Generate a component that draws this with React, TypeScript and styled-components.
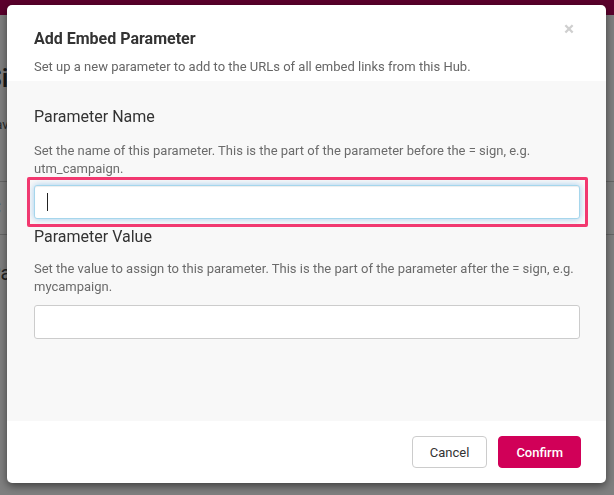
import React from "react";
import styled, { createGlobalStyle } from "styled-components";

const GlobalStyle = createGlobalStyle`
  html, body { margin: 0; padding: 0; }
  body {
    font-family: Roboto, "Liberation Sans", Arial, sans-serif;
    background: #ffffff;
    width: 614px;
    height: 495px;
    overflow: hidden;
  }
  * { box-sizing: border-box; }
`;

const BackPage = styled.div`
  width: 614px;
  height: 495px;
  background: #ffffff;
  display: flex;
  flex-direction: column;
`;

const TopBar = styled.div`
  height: 15px;
  background: #b60058;
  flex: none;
`;

const BackContent = styled.div`
  display: flex;
  flex-direction: column;
  padding: 48px 0 0 0;
  margin-left: -14px;
`;

const BackTitle = styled.div`
  font-size: 26px;
  font-weight: 500;
  color: #333;
  line-height: 30px;
`;

const BackText = styled.div`
  margin-top: 23px;
  font-size: 13px;
  color: #555;
  line-height: 18px;
`;

const BackRow = styled.div<{ $top: number; $height: number }>`
  margin-top: ${(p) => p.$top}px;
  border-top: 1px solid #ccc;
  height: ${(p) => p.$height}px;
  display: flex;
  align-items: center;
  font-size: 20px;
  color: #444;
  padding-left: 2px;
  width: 640px;
`;

const Overlay = styled.div`
  position: fixed;
  inset: 0;
  background: rgba(0, 0, 0, 0.5);
  display: flex;
  align-items: flex-start;
  padding: 5px 0 0 7px;
`;

const Modal = styled.div`
  width: 599px;
  background: #ffffff;
  border-radius: 5px;
  box-shadow: 0 3px 9px rgba(0, 0, 0, 0.5);
  display: flex;
  flex-direction: column;
  overflow: hidden;
`;

const Header = styled.div`
  height: 76px;
  padding: 24px 32px 0 27px;
  display: flex;
  justify-content: space-between;
  align-items: flex-start;
`;

const HeaderText = styled.div`
  display: flex;
  flex-direction: column;
  gap: 9px;
`;

const Title = styled.h4`
  margin: 0;
  font-size: 16px;
  line-height: 20px;
  font-weight: 700;
  color: #333;
`;

const Subtitle = styled.p`
  margin: 0;
  font-size: 13px;
  line-height: 18px;
  color: #666;
`;

const CloseButton = styled.button`
  border: none;
  background: none;
  padding: 0;
  margin-top: -10px;
  font-family: inherit;
  font-size: 19px;
  line-height: 20px;
  font-weight: 700;
  color: #cfcfcf;
  cursor: pointer;
`;

const Body = styled.div`
  height: 340px;
  background: #f8f8f8;
  padding: 26px 26px 0 27px;
  display: flex;
  flex-direction: column;
  gap: 8px;
`;

const Field = styled.div`
  display: flex;
  flex-direction: column;
`;

const Label = styled.label`
  font-size: 16px;
  line-height: 20px;
  color: #333;
`;

const Help = styled.p<{ $gap: number }>`
  margin: ${(p) => p.$gap}px 0 0;
  font-size: 13px;
  line-height: 18px;
  color: #6b6b6b;
`;

const FocusRing = styled.div`
  margin: -1px -8px -8px -7px;
  border: 3px solid #f3386f;
  border-radius: 2px;
  padding: 5px 5px 5px 4px;
  position: relative;
`;

const Caret = styled.span`
  position: absolute;
  left: 17px;
  top: 13px;
  width: 1px;
  height: 18px;
  background: #222;
  pointer-events: none;
`;

const TextInput = styled.input<{ $focused?: boolean; $gap: number }>`
  margin-top: ${(p) => p.$gap}px;
  display: block;
  width: 546px;
  height: 34px;
  padding: 0 12px;
  font-family: inherit;
  font-size: 14px;
  color: #333;
  background: #fff;
  border-radius: 3px;
  border: 1px solid ${(p) => (p.$focused ? "#a6d6ec" : "#cccccc")};
  box-shadow: ${(p) =>
    p.$focused
      ? "inset 0 1px 1px rgba(0,0,0,0.075), 0 0 6px rgba(102,175,233,0.6)"
      : "none"};
  outline: none;
  caret-color: ${(p) => (p.$focused ? "transparent" : "#222")};
`;

const Footer = styled.div`
  height: 62px;
  padding: 15px 25px 0 0;
  display: flex;
  justify-content: flex-end;
  align-items: flex-start;
  gap: 11px;
`;

const Button = styled.button<{ $primary?: boolean }>`
  height: 32px;
  padding: 0 17px;
  border-radius: 4px;
  font-family: inherit;
  font-size: 13px;
  font-weight: ${(p) => (p.$primary ? 500 : 400)};
  border: 1px solid ${(p) => (p.$primary ? "#d10058" : "#cccccc")};
  background: ${(p) => (p.$primary ? "#d10058" : "#ffffff")};
  color: ${(p) => (p.$primary ? "#ffffff" : "#333333")};
  cursor: pointer;
`;

export default function App() {
  return (
    <>
      <GlobalStyle />
      <BackPage aria-hidden="true">
        <TopBar />
        <BackContent>
          <BackTitle>Site</BackTitle>
          <BackText>Hava</BackText>
          <BackRow $top={47} $height={53}>C</BackRow>
          <BackRow $top={0} $height={76}>Pa</BackRow>
        </BackContent>
      </BackPage>
      <Overlay>
        <Modal role="dialog" aria-labelledby="dlg-title">
          <Header>
            <HeaderText>
              <Title id="dlg-title">Add Embed Parameter</Title>
              <Subtitle>
                Set up a new parameter to add to the URLs of all embed links from this Hub.
              </Subtitle>
            </HeaderText>
            <CloseButton aria-label="Close">×</CloseButton>
          </Header>
          <Body>
            <Field>
              <Label htmlFor="param-name">Parameter Name</Label>
              <Help $gap={15}>
                Set the name of this parameter. This is the part of the parameter before the = sign,
                e.g. utm_campaign.
              </Help>
              <FocusRing>
                <TextInput id="param-name" $focused $gap={0} />
                <Caret />
              </FocusRing>
            </Field>
            <Field>
              <Label htmlFor="param-value">Parameter Value</Label>
              <Help $gap={13}>
                Set the value to assign to this parameter. This is the part of the parameter after the
                = sign, e.g. mycampaign.
              </Help>
              <TextInput id="param-value" $gap={9} />
            </Field>
          </Body>
          <Footer>
            <Button>Cancel</Button>
            <Button $primary>Confirm</Button>
          </Footer>
        </Modal>
      </Overlay>
    </>
  );
}
